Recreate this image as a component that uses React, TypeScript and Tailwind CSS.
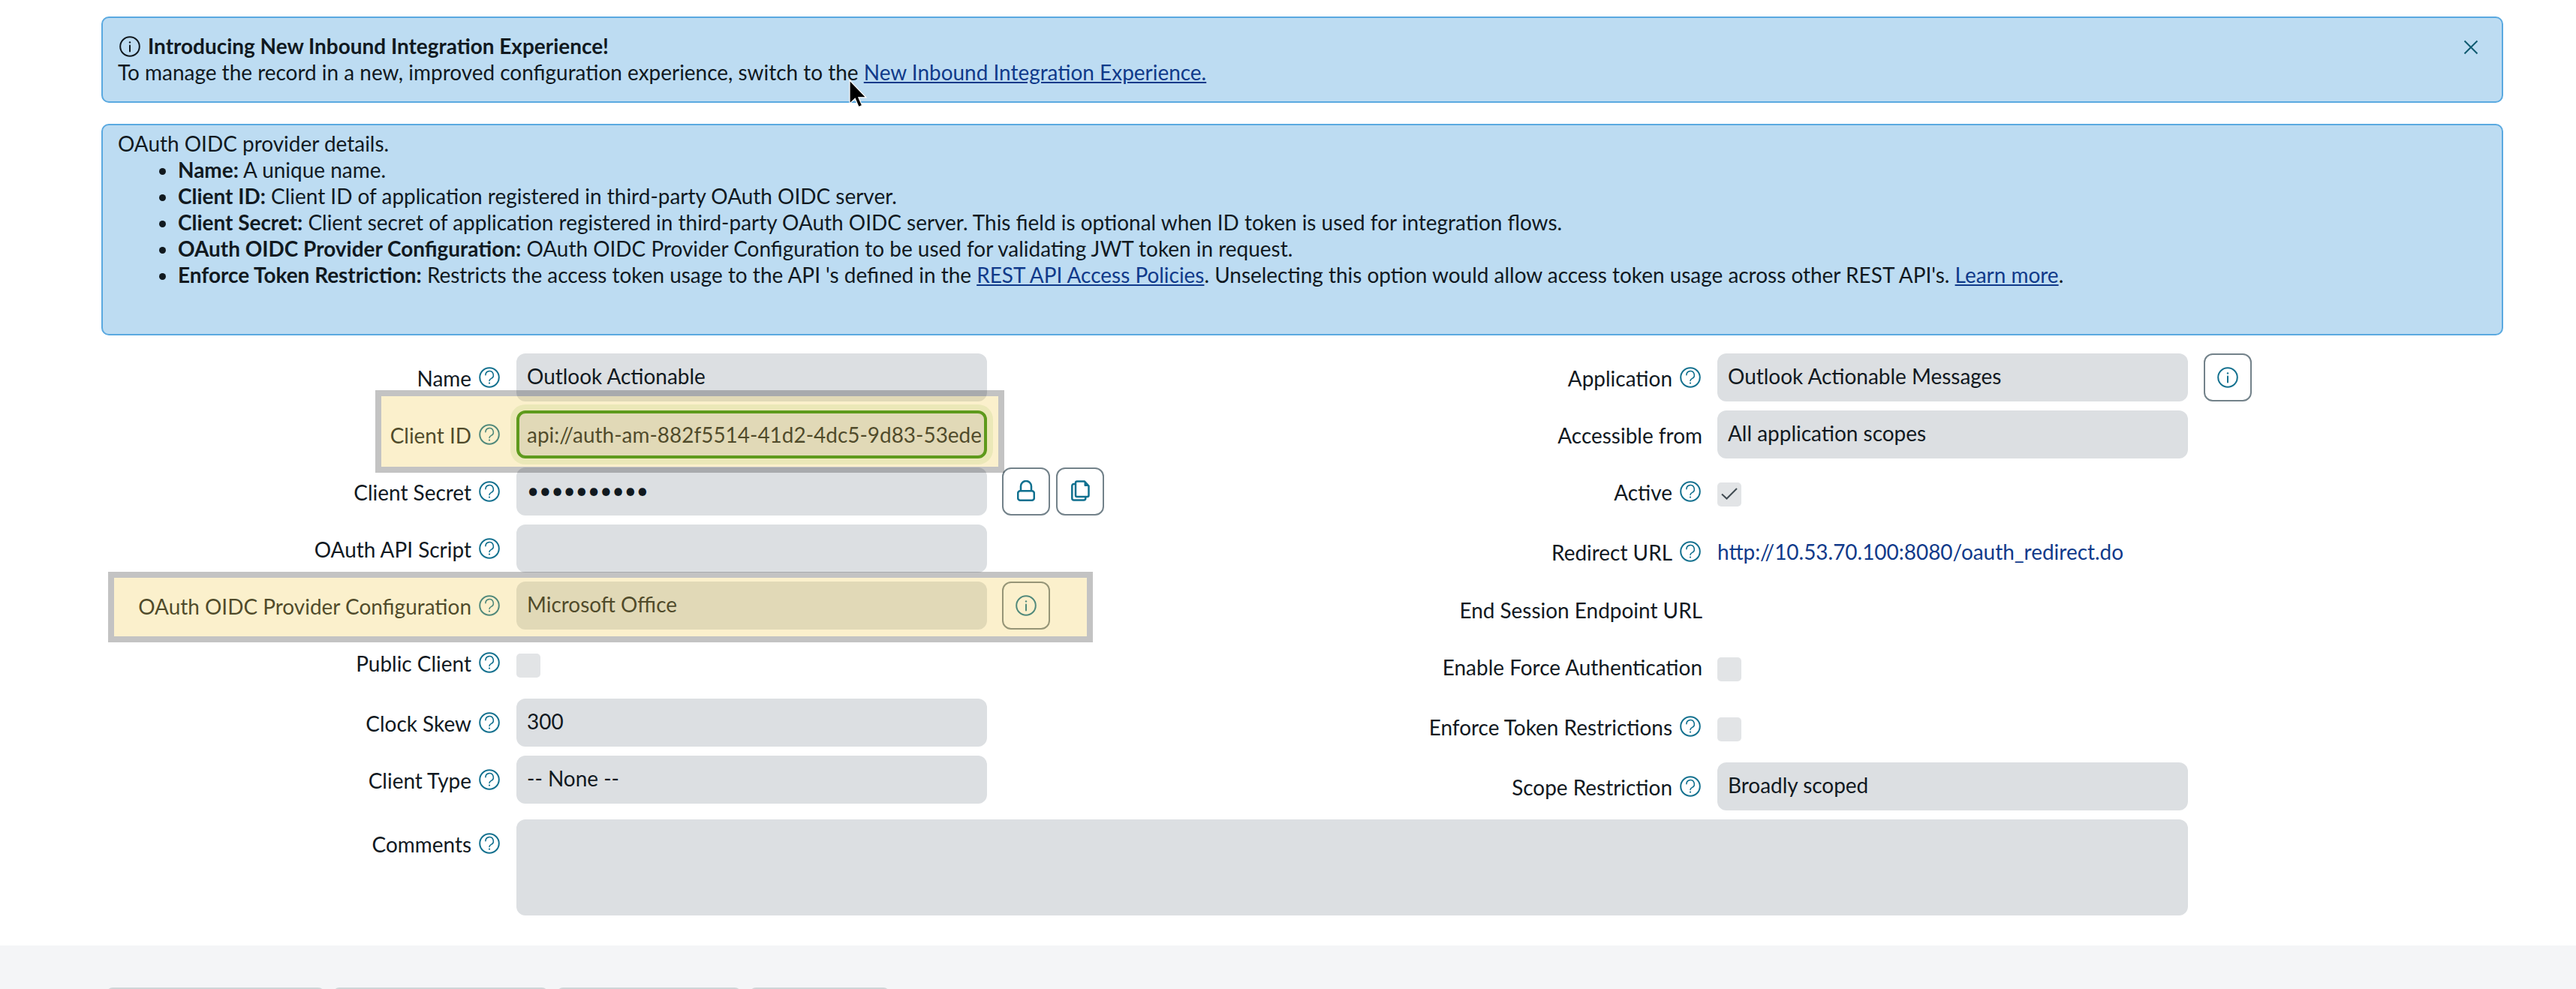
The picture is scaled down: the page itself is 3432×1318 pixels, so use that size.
const ink = "#11191f";

function HelpIcon() {
  return (
    <svg width="28" height="28" viewBox="0 0 28 28" fill="none" stroke="#14718f" strokeWidth="2" className="shrink-0">
      <circle cx="14" cy="14" r="12.8" />
      <path d="M8.9 10.8a5.2 5.2 0 1 1 7.6 4.6c-1.6.9-2.5 1.6-2.5 3.1" strokeWidth="1.6" strokeLinecap="round" />
      <circle cx="14" cy="21.6" r="1.1" fill="#14718f" stroke="none" />
    </svg>
  );
}

function InfoIcon({ color = "#14718f" }: { color?: string }) {
  return (
    <svg width="28" height="28" viewBox="0 0 28 28" fill="none" stroke={color} strokeWidth="2" className="shrink-0">
      <circle cx="14" cy="14" r="12.8" />
      <path d="M14 12.5v8" strokeWidth="2" strokeLinecap="round" />
      <circle cx="14" cy="8.4" r="1.2" fill={color} stroke="none" />
    </svg>
  );
}

function IconButton({ children }: { children: React.ReactNode }) {
  return (
    <div className="w-[64px] h-[64px] rounded-[12px] border-2 border-[#73828a] bg-white flex items-center justify-center shrink-0">
      {children}
    </div>
  );
}

function Label({ text, help = true }: { text: string; help?: boolean }) {
  return (
    <div className={`h-[64px] flex items-center justify-end shrink-0 ${help ? "pr-[22px]" : "pr-[20px]"}`}>
      <span className="mt-[2px] whitespace-nowrap">{text}</span>
      {help && (
        <span className="ml-[10px]">
          <HelpIcon />
        </span>
      )}
    </div>
  );
}

function Field({ value }: { value?: string }) {
  return (
    <div className="w-[627px] h-[64px] rounded-[12px] bg-[#dcdfe2] px-[14px] pb-[3px] flex items-center overflow-hidden whitespace-nowrap shrink-0">
      {value}
    </div>
  );
}

function Check({ checked = false }: { checked?: boolean }) {
  return (
    <div className="w-[32px] h-[32px] mt-5 rounded-[5px] bg-[#e2e4e6] shrink-0">
      {checked && (
        <svg width="32" height="32" viewBox="0 0 32 32" fill="none" stroke="#414b52" strokeWidth="2">
          <path d="M6 15.5l6.5 6L26 8" />
        </svg>
      )}
    </div>
  );
}

function LeftRow({ label, children, tall = false }: { label: string; children: React.ReactNode; tall?: boolean }) {
  return (
    <div className={`flex items-start mb-3 ${tall ? "h-[68px]" : "h-[64px]"}`}>
      <div className="w-[688px] shrink-0">
        <Label text={label} />
      </div>
      {children}
    </div>
  );
}

function RightRow({ label, help = true, children, className = "h-[64px]" }: { label: string; help?: boolean; children?: React.ReactNode; className?: string }) {
  return (
    <div className={`flex items-start mb-3 ${className}`}>
      <div className="w-[808px] shrink-0">
        <Label text={label} help={help} />
      </div>
      {children}
    </div>
  );
}

export default function App() {
  return (
    <div className="relative h-[1318px] overflow-hidden bg-white font-[Lato,sans-serif] text-[27.95px] leading-[35px]" style={{ color: ink }}>
      <div className="pt-[22px] pl-[135px] pr-[97px]">
        {/* new experience banner */}
        <div className="h-[115px] rounded-[10px] border-2 border-[#5aa9e0] bg-[#bddcf2] pt-[20px] pl-[20px] pr-[31px] flex justify-between">
          <div>
            <div className="flex items-center font-bold">
              <span className="ml-[2px] mr-[10px]">
                <InfoIcon color="#11191f" />
              </span>
              Introducing New Inbound Integration Experience!
            </div>
            <div>
              To manage the record in a new, improved configuration experience, switch to the{" "}
              <a className="text-[#103a8a] underline">New Inbound Integration Experience.</a>
            </div>
          </div>
          <svg width="20" height="20" viewBox="0 0 20 20" fill="none" stroke="#0e5a70" strokeWidth="2" className="mt-[9px]">
            <path d="M1.5 1.5l17 17M18.5 1.5l-17 17" />
          </svg>
        </div>

        {/* provider help text */}
        <div className="h-[282px] mt-7 rounded-[10px] border-2 border-[#5aa9e0] bg-[#bddcf2] pt-[7px] pl-[20px]">
          <div>OAuth OIDC provider details.</div>
          <ul className="list-disc pl-[80px]">
            <li><b>Name:</b> A unique name.</li>
            <li><b>Client ID:</b> Client ID of application registered in third-party OAuth OIDC server.</li>
            <li><b>Client Secret:</b> Client secret of application registered in third-party OAuth OIDC server. This field is optional when ID token is used for integration flows.</li>
            <li><b>OAuth OIDC Provider Configuration:</b> OAuth OIDC Provider Configuration to be used for validating JWT token in request.</li>
            <li>
              <b>Enforce Token Restriction:</b> Restricts the access token usage to the API 's defined in the{" "}
              <a className="text-[#103a8a] underline">REST API Access Policies</a>. Unselecting this option would allow access token usage across other REST API's.{" "}
              <a className="text-[#103a8a] underline">Learn more</a>.
            </li>
          </ul>
        </div>
      </div>

      {/* form */}
      <div className="flex items-start mt-6">
        <div className="w-[1480px] shrink-0">
          <LeftRow label="Name">
            <Field value="Outlook Actionable" />
          </LeftRow>
          <LeftRow label="Client ID">
            <div className="w-[627px] h-[64px] rounded-[12px] border-4 border-[#26880c] bg-[#dcdfe2] pl-[10px] pr-[4px] flex items-center shadow-[0_0_0_8px_#e9f4e4] shrink-0">
              <div className="overflow-hidden whitespace-nowrap">api://auth-am-882f5514-41d2-4dc5-9d83-53ede</div>
            </div>
          </LeftRow>
          <LeftRow label="Client Secret">
            <Field value="••••••••••" />
            <div className="flex gap-2 ml-5">
              <IconButton>
                <svg width="24" height="28" viewBox="0 0 24 28" fill="none" stroke="#0f708f" strokeWidth="2.5" className="-mt-[2px]">
                  <rect x="1.2" y="14.2" width="21.6" height="12.6" rx="3" />
                  <path d="M5 14V8a7 7 0 0 1 14 0v6" />
                </svg>
              </IconButton>
              <IconButton>
                <svg width="25" height="28" viewBox="0 0 25 28" fill="none" stroke="#0f708f" strokeWidth="2.5" strokeLinejoin="round" className="-mt-[2px]">
                  <path d="M8 1.5h10l5.5 6V20a2 2 0 0 1-2 2H8a2 2 0 0 1-2-2V3.5a2 2 0 0 1 2-2z" />
                  <path d="M18 1.5v6h5.5z" fill="#0f708f" strokeWidth="1" />
                  <path d="M6 5H3.8a2.5 2.5 0 0 0-2.5 2.5V24a2.5 2.5 0 0 0 2.5 2.5h13a2.5 2.5 0 0 0 2.5-2.5v-2" />
                </svg>
              </IconButton>
            </div>
          </LeftRow>
          <LeftRow label="OAuth API Script">
            <Field />
          </LeftRow>
          <LeftRow label="OAuth OIDC Provider Configuration">
            <Field value="Microsoft Office" />
            <div className="ml-5">
              <IconButton>
                <InfoIcon />
              </IconButton>
            </div>
          </LeftRow>
          <LeftRow label="Public Client" tall>
            <Check />
          </LeftRow>
          <LeftRow label="Clock Skew">
            <Field value="300" />
          </LeftRow>
          <LeftRow label="Client Type">
            <Field value="-- None --" />
          </LeftRow>
        </div>

        <div className="flex-1">
          <RightRow label="Application">
            <Field value="Outlook Actionable Messages" />
            <div className="ml-[21px]">
              <IconButton>
                <InfoIcon />
              </IconButton>
            </div>
          </RightRow>
          <RightRow label="Accessible from" help={false}>
            <Field value="All application scopes" />
          </RightRow>
          <RightRow label="Active" className="h-[68px]">
            <Check checked />
          </RightRow>
          <RightRow label="Redirect URL" className="h-[65px]">
            <a className="h-[64px] flex items-center text-[#103a8a]">http://10.53.70.100:8080/oauth_redirect.do</a>
          </RightRow>
          <RightRow label="End Session Endpoint URL" help={false} />
          <RightRow label="Enable Force Authentication" help={false} className="h-[68px]">
            <Check />
          </RightRow>
          <RightRow label="Enforce Token Restrictions" className="h-[68px]">
            <Check />
          </RightRow>
          <RightRow label="Scope Restriction">
            <Field value="Broadly scoped" />
          </RightRow>
        </div>
      </div>

      <div className="flex items-start">
        <div className="w-[688px] shrink-0">
          <Label text="Comments" />
        </div>
        <div className="w-[2227px] h-[128px] rounded-[12px] bg-[#dcdfe2]" />
      </div>

      {/* form footer, cut off by the window */}
      <div className="mt-10 h-[58px] bg-[#f4f5f7] pt-[56px] pl-[142px] flex gap-3 overflow-hidden">
        <div className="w-[290px] h-[64px] rounded-[8px] bg-[#cfd5d7] shrink-0" />
        <div className="w-[286px] h-[64px] rounded-[8px] bg-[#cfd5d7] shrink-0" />
        <div className="w-[245px] h-[64px] rounded-[8px] bg-[#cfd5d7] shrink-0" />
        <div className="w-[186px] h-[64px] rounded-[8px] bg-[#cfd5d7] shrink-0" />
      </div>

      {/* highlight boxes over the two fields */}
      <div className="absolute left-[500px] top-[520px] w-[838px] h-[110px] border-8 border-black/[0.235] bg-[#f0c949]/[0.28] bg-clip-padding" />
      <div className="absolute left-[144px] top-[762px] w-[1312px] h-[94px] border-8 border-black/[0.235] bg-[#f0c949]/[0.28] bg-clip-padding" />

      {/* mouse pointer */}
      <svg width="24" height="38" viewBox="0 0 12 19" className="absolute left-[1131px] top-[106px]">
        <path d="M.5.5v15.6l3.6-3.4 2.4 5.6 2.3-1-2.4-5.4h5z" fill="#000" stroke="#fff" strokeWidth=".6" />
      </svg>
    </div>
  );
}
